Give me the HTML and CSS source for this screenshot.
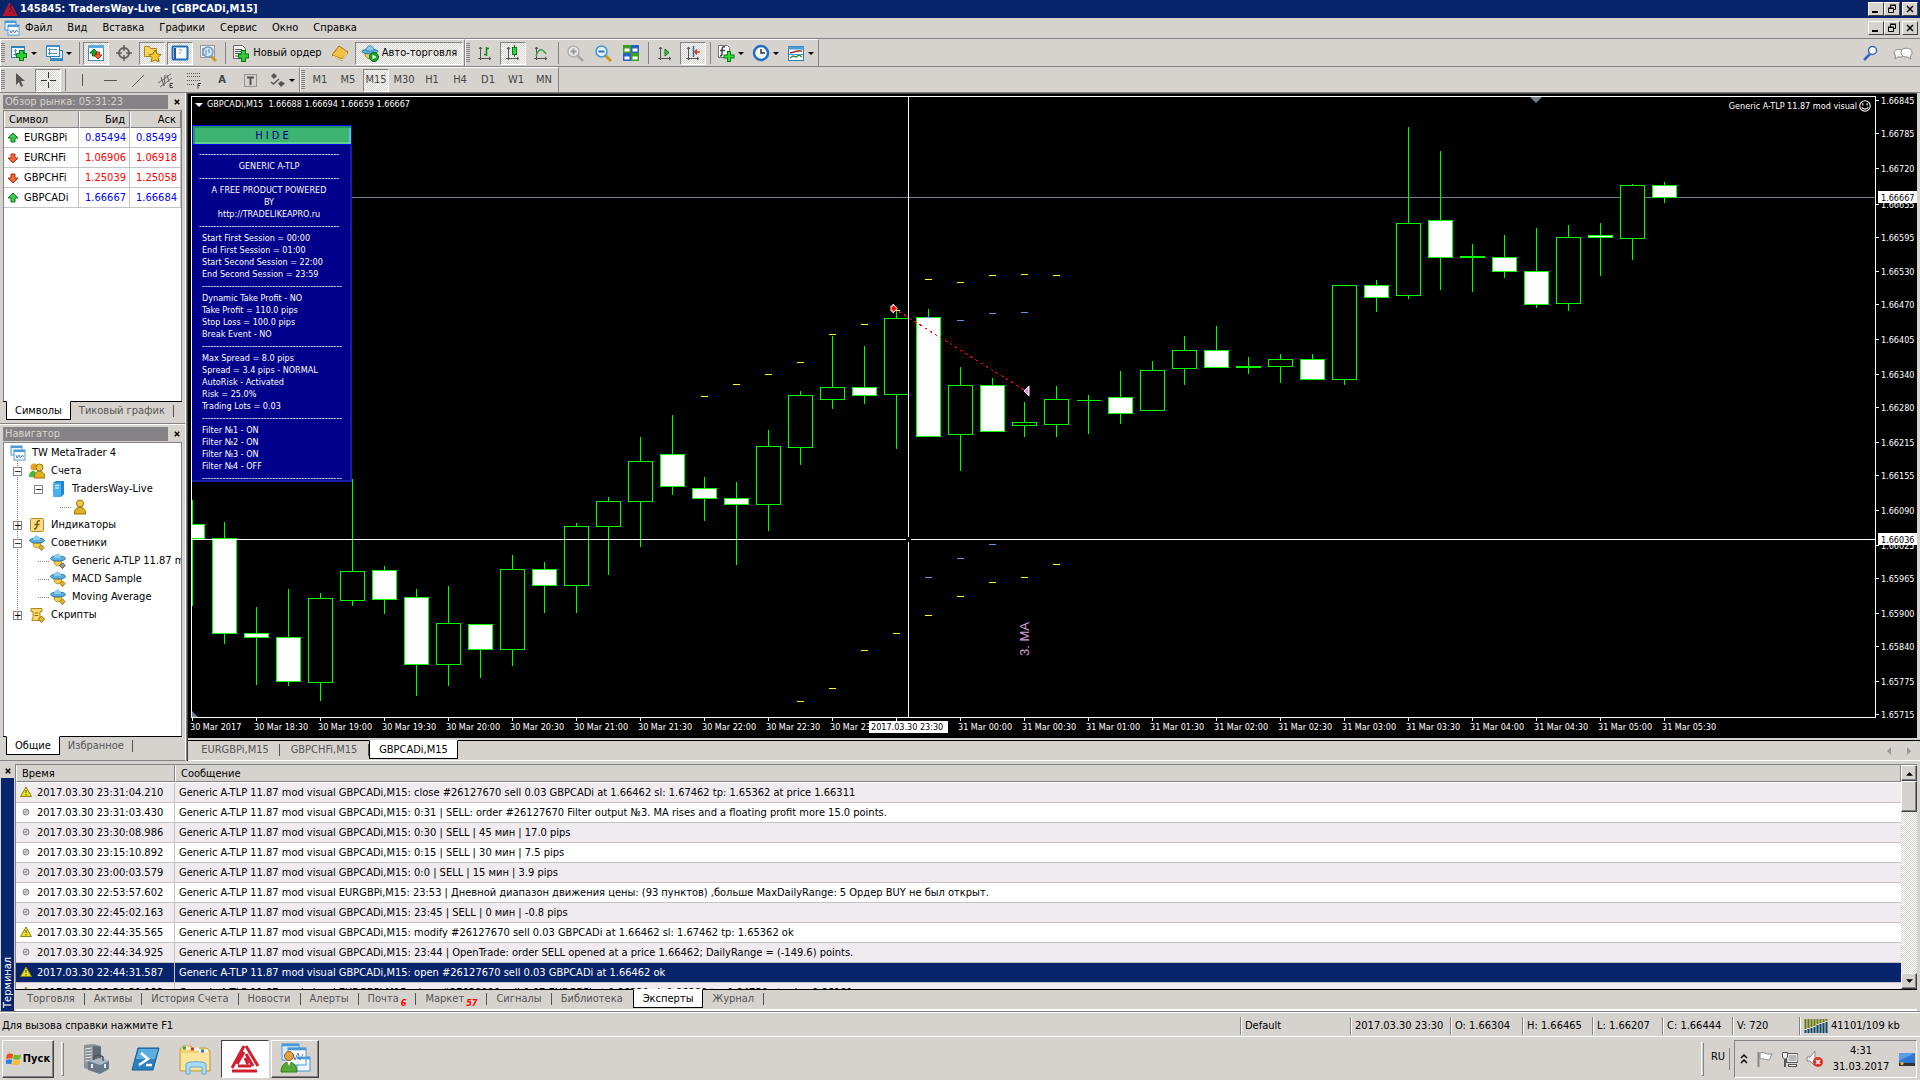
FILE: index.html
```html
<!DOCTYPE html>
<html lang="ru">
<head>
<meta charset="utf-8">
<title>145845: TradersWay-Live - [GBPCADi,M15]</title>
<link rel="stylesheet" href="styles.css">
</head>
<body>
<svg class="defs" aria-hidden="true">
  <symbol id="i-logo" viewBox="0 0 16 16"><path d="M8 2 2 14h12L9.500 4.500M8 6.500 5 12h6.500M8.500 8.500l2 3" fill="none" stroke="#b8142c" stroke-width="2"/></symbol>
  <symbol id="i-charts" viewBox="0 0 16 16"><rect x="1" y="1" width="11" height="9" fill="#eaf5fd" stroke="#4a9ad8"/><path d="M1 2h11" stroke="#4a9ad8" stroke-width="2"/><rect x="4" y="5" width="11" height="10" fill="#fff" stroke="#4a9ad8"/><path d="M4 6h11" stroke="#4a9ad8" stroke-width="2"/><path d="m6 10 1 3 2-3 1.500 3 2-3 1 2" fill="none" stroke="#5878c0"/></symbol>
  <symbol id="i-newchart" viewBox="0 0 18 18"><rect x="1.500" y="2.500" width="13" height="11" fill="#f2f9ff" stroke="#2f7fb8"/><path d="M1 3h14" stroke="#2f7fb8" stroke-width="2"/><path d="M5.500 5v7M3 10.500h9M4 6.500h3" stroke="#5a8fb8"/><path d="M11.500 6v11M6 11.500h11" stroke="#0a7a12" stroke-width="5"/><path d="M11.500 7v9M7 11.500h9" stroke="#2ecc38" stroke-width="3"/></symbol>
  <symbol id="i-profiles" viewBox="0 0 18 18"><rect x="5.500" y="6.500" width="12" height="10" fill="#dceefa" stroke="#2f7fb8"/><rect x="1.500" y="1.500" width="13" height="11" fill="#f2f9ff" stroke="#2f7fb8"/><path d="M1 2h14M5 15h12" stroke="#3f8fc8" stroke-width="2"/><path d="M4.500 4v7M3 5.500h9M3 9.500h9" stroke="#5a8fb8"/></symbol>
  <symbol id="i-market" viewBox="0 0 18 18"><rect x="1.500" y="1.500" width="15" height="15" fill="#fff" stroke="#3f8fc8"/><path d="M1 2.500h16" stroke="#5aaae0" stroke-width="3"/><path d="m7 5 4 4H8.500v3h-3V9H3z" fill="#1fa82c" stroke="#0a6a14"/><path d="m11 15-4-4h2.500V8h3v3H15z" fill="#f0603a" stroke="#b03010"/></symbol>
  <symbol id="i-target" viewBox="0 0 18 18"><circle cx="9" cy="9" r="5" fill="none" stroke="#606060" stroke-width="2"/><path d="M9 1v6M9 11v6M1 9h6M11 9h6" stroke="#606060" stroke-width="1.500"/></symbol>
  <symbol id="i-nav" viewBox="0 0 18 18"><path d="M1.500 2.500h5l1 2h6v8h-12z" fill="#f7d560" stroke="#b08518"/><path d="m12 6 2 4 4 .5-3 3 1 4.500-4-2-4 2 1-4.500-3-3 4-.5z" fill="#f8c828" stroke="#9a7410"/></symbol>
  <symbol id="i-terminal" viewBox="0 0 18 18"><rect x="1.500" y="2.500" width="15" height="13" rx="1" fill="#f4faff" stroke="#1f6fb8" stroke-width="2"/><path d="M4 4v11" stroke="#3050a0" stroke-width="2"/><path d="M8 6h3M8 9h2" stroke="#8898b8"/></symbol>
  <symbol id="i-tester" viewBox="0 0 18 18"><rect x="1.500" y="1.500" width="14" height="12" fill="#eee" stroke="#999"/><path d="M4 4v8M7 3v5" stroke="#555"/><path d="m11 11 6 6" stroke="#c89a28" stroke-width="3"/><circle cx="9" cy="8" r="5" fill="#cfe6f8" stroke="#6a9fc8" stroke-width="1.500"/><path d="M7 6v5M10 5v4" stroke="#5a88b0"/></symbol>
  <symbol id="i-order" viewBox="0 0 18 18"><path d="M1.500 1.500h9l3 3v10h-12z" fill="#f4f4f4" stroke="#6a6a6a"/><path d="M3 5.500h7M3 7.500h8M3 9.500h8M3 12h5" stroke="#555"/><path d="M11.500 6v12M6 12h11" stroke="#0a7a12" stroke-width="5"/><path d="M11.500 7v10M7 12h9" stroke="#2ecc38" stroke-width="3"/></symbol>
  <symbol id="i-book" viewBox="0 0 18 18"><path d="m1 12 7-9 9 6-6 8z" fill="#9a6a10"/><path d="m1 11 7-9 9 6-6 7z" fill="#f3c044" stroke="#a87414"/><path d="m2 12 9 4 5-7" fill="none" stroke="#fff0c0"/></symbol>
  <symbol id="i-expert" viewBox="0 0 18 18"><path d="M4 9c0 7 9 8 10 0z" fill="#f5d04a" stroke="#a88018"/><ellipse cx="9" cy="7.500" rx="8" ry="2.500" fill="#5aaee0" stroke="#2f78a8"/><path d="M5 7c0-7 8-7 8 0z" fill="#8accf0" stroke="#3f88b8"/></symbol>
  <symbol id="i-auto" viewBox="0 0 18 18"><use href="#i-expert"/><circle cx="13" cy="13" r="4.500" fill="#18a828" stroke="#0a6814"/><path d="m11.500 10.500 4 2.500-4 2.500z" fill="#fff"/></symbol>
  <symbol id="i-bars" viewBox="0 0 18 18"><path d="M4.500 3v13M2 14.500h13M3 5l1.500-2L6 5m7 8 2 1.500-2 1.500" fill="none" stroke="#555"/><path d="M10.500 3v9M8 10.500h3M10 4.500h3" stroke="#0f8a1c" stroke-width="1.500"/></symbol>
  <symbol id="i-candle" viewBox="0 0 18 18"><path d="M4.500 3v13M2 14.500h13M3 5l1.500-2L6 5m7 8 2 1.500-2 1.500" fill="none" stroke="#555"/><path d="M10.500 1v12" stroke="#0a7a12"/><rect x="8.500" y="3.500" width="4" height="7" fill="#2ed840" stroke="#0a7a12"/></symbol>
  <symbol id="i-line" viewBox="0 0 18 18"><path d="M4.500 3v13M2 14.500h13M3 5l1.500-2L6 5m7 8 2 1.500-2 1.500" fill="none" stroke="#555"/><path d="M4 12c3-8 6-8 10-2" fill="none" stroke="#3fa048" stroke-width="1.500"/></symbol>
  <symbol id="i-zoomin" viewBox="0 0 18 18"><path d="m11 11 6 6" stroke="#a8a8a8" stroke-width="2.500"/><circle cx="7.500" cy="7.500" r="5.500" fill="#e8e8e8" stroke="#b0b0b0" stroke-width="1.500"/><path d="M4.500 7.500h6M7.500 4.500v6" stroke="#999" stroke-width="2"/></symbol>
  <symbol id="i-zoomout" viewBox="0 0 18 18"><path d="m11 11 6 6" stroke="#c89a18" stroke-width="3"/><circle cx="7.500" cy="7.500" r="5.500" fill="#dff0fc" stroke="#3f98d8" stroke-width="1.500"/><path d="M4.500 7.500h6" stroke="#2f78b8" stroke-width="2"/></symbol>
  <symbol id="i-tile" viewBox="0 0 18 18"><path d="M1 1h8v8H1zM9 9h8v8H9z" fill="#3fa020"/><path d="M9 1h8v8H9zM1 9h8v8H1z" fill="#2860c8"/><path d="M2.500 4.500h5v3h-5zm8 0h5v3h-5zm-8 8h5v3h-5zm8 0h5v3h-5z" fill="#fff"/></symbol>
  <symbol id="i-scroll" viewBox="0 0 18 18"><path d="M4.500 3v13M2 14.500h13M3 5l1.500-2L6 5m7 8 2 1.500-2 1.500" fill="none" stroke="#555"/><path d="m9 5 4 3.500L9 12z" fill="#3fc850" stroke="#0a7a12"/></symbol>
  <symbol id="i-shift" viewBox="0 0 18 18"><path d="M4.500 3v13M2 14.500h13M3 5l1.500-2L6 5m7 8 2 1.500-2 1.500" fill="none" stroke="#555"/><path d="M9.500 2v11" stroke="#1f6fa8" stroke-width="1.500"/><path d="M16 8h-5m2-2.500L11 8l2 2.500" fill="none" stroke="#c83c10" stroke-width="1.500"/></symbol>
  <symbol id="i-indic" viewBox="0 0 18 18"><path d="M1.500 1.500h9l2 2v10h-11z" fill="#fff" stroke="#777"/><path d="M8 3c-3-1-3 2-3 5s0 4-2 4M3 6.500h5" fill="none" stroke="#444" stroke-width="1.500"/><path d="M12 7v11M6.500 12.500h11" stroke="#0a7a12" stroke-width="4"/><path d="M12 8v9M7.500 12.500h9" stroke="#2ee038" stroke-width="2"/></symbol>
  <symbol id="i-clock" viewBox="0 0 18 18"><circle cx="9" cy="9" r="7" fill="#f2f8fd" stroke="#1f6fc0" stroke-width="2.500"/><path d="M9 5v4h4" fill="none" stroke="#333" stroke-width="1.500"/></symbol>
  <symbol id="i-templ" viewBox="0 0 18 18"><rect x="1.500" y="2.500" width="15" height="14" fill="#fff" stroke="#2f7fc0"/><path d="M1 4h16" stroke="#4a9ad8" stroke-width="3"/><path d="m3 9 4-1 3-1 5 0" fill="none" stroke="#a03020" stroke-width="1.500"/><path d="m3 14 3-2 3 1 3-2 3 2" fill="none" stroke="#2f8a38" stroke-width="1.500"/><path d="M2 10.500h14" stroke="#4a9ad8"/></symbol>
  <symbol id="i-arrow" viewBox="0 0 18 18"><path d="M5 2v12l3-3 2 5 2-1-2-5h4z" fill="#555"/></symbol>
  <symbol id="i-cross" viewBox="0 0 18 18"><path d="M9.500 1v6M9.500 11v6M2 9.500h6M11 9.500h6" stroke="#333"/></symbol>
  <symbol id="i-vline" viewBox="0 0 18 18"><path d="M9.500 3v12" stroke="#555"/></symbol>
  <symbol id="i-hline" viewBox="0 0 18 18"><path d="M3 9.500h13" stroke="#555"/></symbol>
  <symbol id="i-trend" viewBox="0 0 18 18"><path d="M3 16 15 4" stroke="#666"/></symbol>
  <symbol id="i-channel" viewBox="0 0 18 18"><path d="m1 12 13-9M3 16 15 7M4 6l3 9M8 4l-1 11M10 4l2 7" stroke="#666" fill="none"/><path d="M16 12.500h-3v4h3m-3-2h2" fill="none" stroke="#444"/></symbol>
  <symbol id="i-fibo" viewBox="0 0 18 18"><path d="M2 2.500h14M2 5.500h14M2 9.500h14M2 13.500h8" stroke="#555" stroke-dasharray="1 1"/><path d="M16 12.500h-3v5m0-3h2" fill="none" stroke="#444"/></symbol>
  <symbol id="i-label" viewBox="0 0 18 18"><rect x="3.500" y="3.500" width="12" height="12" fill="none" stroke="#555" stroke-dasharray="1 1"/><path d="M6 6.500h7M9.500 6v8" stroke="#555" stroke-width="2"/></symbol>
  <symbol id="i-shapes" viewBox="0 0 18 18"><path d="m6 2 3 3-3 3-3-3zM13 10l4 2.500-4 3.500-3-3.500z" fill="#555"/><path d="m3 11 2.500 2L11 8" fill="none" stroke="#555" stroke-width="1.500"/></symbol>
  <symbol id="i-up" viewBox="0 0 12 12"><path d="m6 1 5 5H8v4H4V6H1z" fill="#3fc850" stroke="#0a7a12"/></symbol>
  <symbol id="i-down" viewBox="0 0 12 12"><path d="m6 11 5-5H8V2H4v4H1z" fill="#f0683c" stroke="#a83010"/></symbol>
  <symbol id="i-person" viewBox="0 0 16 16"><path d="M2.500 15c-1-9 12-9 11 0z" fill="#e0b020" stroke="#94700c"/><circle cx="8" cy="4.500" r="3.500" fill="#f0c840" stroke="#94700c"/></symbol>
  <symbol id="i-people" viewBox="0 0 16 16"><path d="M0 14c0-8 8-8 8 0z" fill="#40b840"/><circle cx="5" cy="4" r="3.500" fill="#e8a020"/><path d="M5 15c0-9 11-9 11 0z" fill="#e0b020" stroke="#94700c"/><circle cx="10.500" cy="4.500" r="3.500" fill="#f0c840" stroke="#94700c"/></symbol>
  <symbol id="i-server" viewBox="0 0 16 16"><path d="M3 2 6 0h8v13l-3 3H3z" fill="#1f88d0"/><path d="M3 2h8v14H3z" fill="#4ab0f0"/><path d="M5 4.500h4M5 7h4" stroke="#fff"/></symbol>
  <symbol id="i-func" viewBox="0 0 16 16"><rect x="1.500" y="1.500" width="13" height="13" rx="1" fill="#f8dc88" stroke="#b88c20"/><path d="M11 4c-3-1-3 2-3 4s0 4-3 4M5.500 7.500h5" fill="none" stroke="#805808" stroke-width="1.500"/></symbol>
  <symbol id="i-advisor" viewBox="0 0 16 16"><path d="M4 8c0 6 7 7 8 0z" fill="#f5d04a" stroke="#b89018"/><ellipse cx="8" cy="5.500" rx="7.500" ry="2.500" fill="#5aaee0" stroke="#2f78a8"/><path d="M4 5c0-6 7-6 7 0z" fill="#8accf0"/><path d="m12.500 10 2.500 2.500-2.500 3-2.500-3z" fill="#e8b830" stroke="#94700c"/></symbol>
  <symbol id="i-advisor-off" viewBox="0 0 16 16"><use href="#i-advisor"/><path d="m12.500 10 2.500 2.500-2.500 3-2.500-3z" fill="#999" stroke="#666"/></symbol>
  <symbol id="i-script" viewBox="0 0 16 16"><path d="M2 1.500h11v3h-2v7h2v2H3v-2h1v-7H2z" fill="#f8dc70" stroke="#b08818"/><path d="M5.500 6h4M5.500 8.500h4" stroke="#94700c"/><path d="m12.500 9 3 3-3 3.500-3-3.500z" fill="#e8b830" stroke="#94700c"/></symbol>
  <symbol id="i-warn" viewBox="0 0 14 14"><path d="M7 2 12.500 11.500h-11z" fill="#e8e020" stroke="#8a8410"/><path d="M7 5v3M7 9v1.500" stroke="#555" stroke-width="1"/></symbol>
  <symbol id="i-info" viewBox="0 0 14 14"><circle cx="7" cy="7" r="3" fill="#d0d0d0" stroke="#888"/><path d="M5.500 8 8 5.500" stroke="#888"/></symbol>
  <symbol id="i-win" viewBox="0 0 18 18"><path d="M1 4c3-2 5-1 7 0L7 9C5 8 3 8 0 9z" fill="#e8501c"/><path d="M9 4c3 1 5 1 8 0l-1 5c-3 1-5 1-8 0z" fill="#6ab82c"/><path d="M0 10c3-1 5-1 7 0l-1 5c-3-1-4-1-7 0z" fill="#2f80d8"/><path d="M8 10c3 1 5 1 8 0l-1 5c-3 1-5 1-8 0z" fill="#f8c020"/></symbol>
</svg>

<header class="titlebar">
  <svg class="ic16"><use href="#i-logo"/></svg>
  <h1>145845: TradersWay-Live - [GBPCADi,M15]</h1>
  <div class="winbtns">
    <button type="button" aria-label="Свернуть"><svg viewBox="0 0 12 10"><path d="M2 8h6" stroke="#000" stroke-width="2"/></svg></button>
    <button type="button" aria-label="Восстановить"><svg viewBox="0 0 12 10"><path d="M4.500 4V1.500h5v4H8M4 1h6M2.500 4.500h5v4h-5zM2 4h6" fill="none" stroke="#000"/></svg></button>
    <button type="button" aria-label="Закрыть" class="gap"><svg viewBox="0 0 12 10"><path d="m3 2 6 6M9 2 3 8" stroke="#000" stroke-width="1.500"/></svg></button>
  </div>
</header>

<nav class="menubar">
  <svg class="ic16"><use href="#i-charts"/></svg>
  <a href="#">Файл</a><a href="#">Вид</a><a href="#">Вставка</a><a href="#">Графики</a><a href="#">Сервис</a><a href="#">Окно</a><a href="#">Справка</a>
  <div class="winbtns">
    <button type="button" aria-label="Свернуть"><svg viewBox="0 0 12 10"><path d="M2 8h6" stroke="#000" stroke-width="2"/></svg></button>
    <button type="button" aria-label="Восстановить"><svg viewBox="0 0 12 10"><path d="M4.500 4V1.500h5v4H8M4 1h6M2.500 4.500h5v4h-5zM2 4h6" fill="none" stroke="#000"/></svg></button>
    <button type="button" aria-label="Закрыть" class="gap"><svg viewBox="0 0 12 10"><path d="m3 2 6 6M9 2 3 8" stroke="#000" stroke-width="1.500"/></svg></button>
  </div>
</nav>

<div class="toolrow">
  <div class="toolbar">
    <i class="grip"></i>
    <button type="button" class="tb dd" aria-label="Новый график"><svg><use href="#i-newchart"/></svg></button>
    <button type="button" class="tb dd" aria-label="Профили"><svg><use href="#i-profiles"/></svg></button>
    <i class="sep"></i>
    <button type="button" class="tb on" aria-label="Обзор рынка"><svg><use href="#i-market"/></svg></button>
    <button type="button" class="tb" aria-label="Окно данных"><svg><use href="#i-target"/></svg></button>
    <button type="button" class="tb on" aria-label="Навигатор"><svg><use href="#i-nav"/></svg></button>
    <button type="button" class="tb on" aria-label="Терминал"><svg><use href="#i-terminal"/></svg></button>
    <button type="button" class="tb" aria-label="Тестер"><svg><use href="#i-tester"/></svg></button>
    <i class="sep"></i>
    <button type="button" class="tb wide order"><svg><use href="#i-order"/></svg>Новый ордер</button>
    <button type="button" class="tb" aria-label="Редактор"><svg><use href="#i-book"/></svg></button>
    <button type="button" class="tb wide auto on"><svg><use href="#i-auto"/></svg>Авто-торговля</button>
  </div>
  <div class="toolbar">
    <i class="grip"></i>
    <button type="button" class="tb" aria-label="Бары"><svg><use href="#i-bars"/></svg></button>
    <button type="button" class="tb on" aria-label="Свечи"><svg><use href="#i-candle"/></svg></button>
    <button type="button" class="tb" aria-label="Линия"><svg><use href="#i-line"/></svg></button>
    <i class="sep"></i>
    <button type="button" class="tb" aria-label="Увеличить"><svg><use href="#i-zoomin"/></svg></button>
    <button type="button" class="tb" aria-label="Уменьшить"><svg><use href="#i-zoomout"/></svg></button>
    <button type="button" class="tb" aria-label="Упорядочить"><svg><use href="#i-tile"/></svg></button>
    <i class="sep"></i>
    <button type="button" class="tb" aria-label="Автопрокрутка"><svg><use href="#i-scroll"/></svg></button>
    <button type="button" class="tb on" aria-label="Сдвиг графика"><svg><use href="#i-shift"/></svg></button>
    <i class="sep"></i>
    <button type="button" class="tb dd" aria-label="Индикаторы"><svg><use href="#i-indic"/></svg></button>
    <button type="button" class="tb dd" aria-label="Периоды"><svg><use href="#i-clock"/></svg></button>
    <button type="button" class="tb dd" aria-label="Шаблоны"><svg><use href="#i-templ"/></svg></button>
  </div>
  <div class="toolright">
    <svg viewBox="0 0 18 18"><path d="m2 16 6-6" stroke="#2f68c0" stroke-width="2.500"/><circle cx="10.500" cy="6.500" r="4" fill="#fff" stroke="#2f68c0" stroke-width="1.500"/></svg>
    <svg viewBox="0 0 22 18"><path d="M2 9c0-5 10-5 10 0s-4 4-6 4l-3 2 .5-3Z" fill="#f4f4f4" stroke="#888"/><path d="M9 8c0-5 11-5 11 0 0 3-1 3-2 4l1 3-4-2c-3 0-6-1-6-5z" fill="#fff" stroke="#888"/></svg>
  </div>
</div>
<div class="toolrow second">
  <div class="toolbar">
    <i class="grip"></i>
    <button type="button" class="tb" aria-label="Курсор"><svg><use href="#i-arrow"/></svg></button>
    <button type="button" class="tb on" aria-label="Перекрестие"><svg><use href="#i-cross"/></svg></button>
    <i class="sep"></i>
    <button type="button" class="tb" aria-label="Вертикальная линия"><svg><use href="#i-vline"/></svg></button>
    <button type="button" class="tb" aria-label="Горизонтальная линия"><svg><use href="#i-hline"/></svg></button>
    <button type="button" class="tb" aria-label="Трендовая линия"><svg><use href="#i-trend"/></svg></button>
    <button type="button" class="tb" aria-label="Канал"><svg><use href="#i-channel"/></svg></button>
    <button type="button" class="tb" aria-label="Фибоначчи"><svg><use href="#i-fibo"/></svg></button>
    <button type="button" class="tb letter">A</button>
    <button type="button" class="tb" aria-label="Метка"><svg><use href="#i-label"/></svg></button>
    <button type="button" class="tb dd" aria-label="Стрелки"><svg><use href="#i-shapes"/></svg></button>
  </div>
  <div class="toolbar">
    <i class="grip"></i>
    <button type="button" class="tb">M1</button><button type="button" class="tb">M5</button><button type="button" class="tb on">M15</button><button type="button" class="tb">M30</button><button type="button" class="tb">H1</button><button type="button" class="tb">H4</button><button type="button" class="tb">D1</button><button type="button" class="tb">W1</button><button type="button" class="tb">MN</button>
  </div>
</div>

<main class="workspace">
  <aside class="side">
    <section class="pane market">
      <header><h2>Обзор рынка: 05:31:23</h2><button type="button" class="x" aria-label="Закрыть"><svg viewBox="0 0 8 8"><path d="m1 1 6 6M7 1 1 7" stroke="#000" stroke-width="2"/></svg></button></header>
      <div class="box">
        <table class="quotes">
          <thead><tr><th>Символ</th><th>Бид</th><th>Аск</th></tr></thead>
          <tbody>
            <tr class="up"><td><svg><use href="#i-up"/></svg>EURGBPi</td><td>0.85494</td><td>0.85499</td></tr>
            <tr class="down"><td><svg><use href="#i-down"/></svg>EURCHFi</td><td>1.06906</td><td>1.06918</td></tr>
            <tr class="down"><td><svg><use href="#i-down"/></svg>GBPCHFi</td><td>1.25039</td><td>1.25058</td></tr>
            <tr class="up"><td><svg><use href="#i-up"/></svg>GBPCADi</td><td>1.66667</td><td>1.66684</td></tr>
          </tbody>
        </table>
      </div>
      <div class="tabs"><button type="button" class="tab on">Символы</button><button type="button" class="tab">Тиковый график</button></div>
    </section>
    <section class="pane nav">
      <header><h2>Навигатор</h2><button type="button" class="x" aria-label="Закрыть"><svg viewBox="0 0 8 8"><path d="m1 1 6 6M7 1 1 7" stroke="#000" stroke-width="2"/></svg></button></header>
      <div class="box">
        <ul class="tree">
          <li class="root"><svg><use href="#i-charts"/></svg>TW MetaTrader 4</li>
          <li><i class="tog">−</i><svg><use href="#i-people"/></svg>Счета</li>
          <li class="l2"><i class="tog">−</i><svg><use href="#i-server"/></svg>TradersWay-Live</li>
          <li class="l3"><i class="stub"></i><svg><use href="#i-person"/></svg></li>
          <li><i class="tog">+</i><svg><use href="#i-func"/></svg>Индикаторы</li>
          <li><i class="tog">−</i><svg><use href="#i-advisor"/></svg>Советники</li>
          <li class="l2"><i class="stub"></i><svg><use href="#i-advisor-off"/></svg>Generic A-TLP 11.87 mod visual</li>
          <li class="l2"><i class="stub"></i><svg><use href="#i-advisor"/></svg>MACD Sample</li>
          <li class="l2"><i class="stub"></i><svg><use href="#i-advisor"/></svg>Moving Average</li>
          <li><i class="tog">+</i><svg><use href="#i-script"/></svg>Скрипты</li>
        </ul>
      </div>
      <div class="tabs"><button type="button" class="tab on">Общие</button><button type="button" class="tab">Избранное</button></div>
    </section>
  </aside>

  <section class="charts">
    <div class="chart">
      <div class="plot">
        <svg id="plot" class="canvas"></svg>
        <p class="ohlc"><i></i>GBPCADi,M15&nbsp; 1.66688 1.66694 1.66659 1.66667</p>
        <p class="expert">Generic A-TLP 11.87 mod visual<svg viewBox="0 0 11 11"><circle cx="5.500" cy="5.500" r="4.800" fill="none" stroke="#fff"/><path d="M3.500 3v2M7.500 3v2M2.500 6.500c1 2.500 5 2.500 6 0" fill="none" stroke="#fff"/></svg></p>
        <div class="info">
          <button type="button">H I D E</button>
          <pre><span>------------------------------------------------</span>
<b>GENERIC A-TLP</b>
<span>------------------------------------------------</span>
<b>A FREE PRODUCT POWERED</b>
<b>BY</b>
<b>http://TRADELIKEAPRO.ru</b>
<span>------------------------------------------------</span>
Start First Session = 00:00
End First Session = 01:00
Start Second Session = 22:00
End Second Session = 23:59
------------------------------------------------
Dynamic Take Profit - NO
Take Profit = 110.0 pips
Stop Loss = 100.0 pips
Break Event - NO
------------------------------------------------
Max Spread = 8.0 pips
Spread = 3.4 pips - NORMAL
AutoRisk - Activated
Risk = 25.0%
Trading Lots = 0.03
------------------------------------------------
Filter №1 - ON
Filter №2 - ON
Filter №3 - ON
Filter №4 - OFF
------------------------------------------------</pre>
        </div>
      </div>
      <svg id="prices" class="axis"></svg>
      <svg id="times" class="axis times"></svg>
    </div>
    <div class="tabs charttabs">
      <button type="button" class="tab">EURGBPi,M15</button><button type="button" class="tab">GBPCHFi,M15</button><button type="button" class="tab on">GBPCADi,M15</button>
      <svg class="pager" viewBox="0 0 30 10"><path d="M5 1v8L1 5zM21 1v8l4-4z" fill="#9a9898"/></svg>
    </div>
  </section>
</main>

<section class="terminal">
  <div class="spine"><button type="button" class="x" aria-label="Закрыть"><svg viewBox="0 0 8 8"><path d="m1 1 6 6M7 1 1 7" stroke="#000" stroke-width="2"/></svg></button><h2>Терминал</h2></div>
  <div class="tbody">
    <div class="logbox">
      <div class="logscroll">
      <table class="log">
        <thead><tr><th>Время</th><th>Сообщение</th></tr></thead>
        <tbody>
          <tr><td><svg><use href="#i-warn"/></svg>2017.03.30 23:31:04.210</td><td>Generic A-TLP 11.87 mod visual GBPCADi,M15: close #26127670 sell 0.03 GBPCADi at 1.66462 sl: 1.67462 tp: 1.65362 at price 1.66311</td></tr>
          <tr><td><svg><use href="#i-info"/></svg>2017.03.30 23:31:03.430</td><td>Generic A-TLP 11.87 mod visual GBPCADi,M15: 0:31 | SELL: order #26127670 Filter output №3. MA rises and a floating profit more 15.0 points.</td></tr>
          <tr><td><svg><use href="#i-info"/></svg>2017.03.30 23:30:08.986</td><td>Generic A-TLP 11.87 mod visual GBPCADi,M15: 0:30 | SELL | 45 мин | 17.0 pips</td></tr>
          <tr><td><svg><use href="#i-info"/></svg>2017.03.30 23:15:10.892</td><td>Generic A-TLP 11.87 mod visual GBPCADi,M15: 0:15 | SELL | 30 мин | 7.5 pips</td></tr>
          <tr><td><svg><use href="#i-info"/></svg>2017.03.30 23:00:03.579</td><td>Generic A-TLP 11.87 mod visual GBPCADi,M15: 0:0 | SELL | 15 мин | 3.9 pips</td></tr>
          <tr><td><svg><use href="#i-info"/></svg>2017.03.30 22:53:57.602</td><td>Generic A-TLP 11.87 mod visual EURGBPi,M15: 23:53 | Дневной диапазон движения цены: (93 пунктов) ,больше MaxDailyRange: 5 Ордер BUY не был открыт.</td></tr>
          <tr><td><svg><use href="#i-info"/></svg>2017.03.30 22:45:02.163</td><td>Generic A-TLP 11.87 mod visual GBPCADi,M15: 23:45 | SELL | 0 мин | -0.8 pips</td></tr>
          <tr><td><svg><use href="#i-warn"/></svg>2017.03.30 22:44:35.565</td><td>Generic A-TLP 11.87 mod visual GBPCADi,M15: modify #26127670 sell 0.03 GBPCADi at 1.66462 sl: 1.67462 tp: 1.65362 ok</td></tr>
          <tr><td><svg><use href="#i-info"/></svg>2017.03.30 22:44:34.925</td><td>Generic A-TLP 11.87 mod visual GBPCADi,M15: 23:44 | OpenTrade: order SELL opened at a price 1.66462; DailyRange = (-149.6) points.</td></tr>
          <tr class="sel"><td><svg><use href="#i-warn"/></svg>2017.03.30 22:44:31.587</td><td>Generic A-TLP 11.87 mod visual GBPCADi,M15: open #26127670 sell 0.03 GBPCADi at 1.66462 ok</td></tr>
          <tr><td><svg><use href="#i-warn"/></svg>2017.03.30 22:30:31.133</td><td>Generic A-TLP 11.87 mod visual EURGBPi,M15: close #27039909 sell 0.07 EURGBPi at 0.86230 sl: 0.86280 tp: 0.84730 at price 0.86181</td></tr>
        </tbody>
      </table>
      </div>
      <div class="scrollbar"><button type="button" aria-label="Вверх"><svg viewBox="0 0 8 5"><path d="M0 5 4 1l4 4z"/></svg></button><i></i><button type="button" class="dn" aria-label="Вниз"><svg viewBox="0 0 8 5"><path d="M0 0 4 4l4-4z"/></svg></button></div>
    </div>
    <div class="tabs termtabs">
      <button type="button" class="tab">Торговля</button><button type="button" class="tab">Активы</button><button type="button" class="tab">История Счета</button><button type="button" class="tab">Новости</button><button type="button" class="tab">Алерты</button><button type="button" class="tab">Почта<sub>6</sub></button><button type="button" class="tab">Маркет<sub>57</sub></button><button type="button" class="tab">Сигналы</button><button type="button" class="tab last">Библиотека</button><button type="button" class="tab on">Эксперты</button><button type="button" class="tab">Журнал</button>
    </div>
  </div>
</section>

<footer class="statusbar">
  <span class="help">Для вызова справки нажмите F1</span>
  <span class="s-profile">Default</span><span class="s-date">2017.03.30 23:30</span><span class="s-o">O: 1.66304</span><span class="s-h">H: 1.66465</span><span class="s-l">L: 1.66207</span><span class="s-c">C: 1.66444</span><span class="s-v">V: 720</span>
  <span class="s-net"><svg viewBox="0 0 24 14"><path d="M1.500 0v10M4.500 0v9M7.500 0v8M10.500 0v7M13.500 0v5M16.500 0v4M19.500 0v3M22.500 0v2" stroke="#6a7c10" stroke-width="2"/><path d="M1.500 11v3M4.500 10v4M7.500 9v5M10.500 8v6M13.500 6v8M16.500 5v9M19.500 4v10M22.500 3v11" stroke="#104868" stroke-width="2"/></svg>41101/109 kb</span>
</footer>

<footer class="taskbar">
  <button type="button" class="start"><svg><use href="#i-win"/></svg>Пуск</button>
  <i class="tsep"></i>
  <div class="apps">
    <button type="button" class="app" aria-label="Сервер"><svg viewBox="0 0 32 32"><path d="M5 2 14 1l8 2v22l-8 3-9-3z" fill="#8a9298"/><path d="M14 3v25l8-3V4z" fill="#606a72"/><path d="M6 6l7-1M6 9l7-1M6 12l7-1M6 15l7-1M6 18l7-1" stroke="#e0e4e8"/><path d="m9 18 12-3 9 3v8l-9 5-12-4z" fill="#6a7a88"/><path d="m9 18 12 4 9-4-9-3z" fill="#a8b8c4"/><path d="M15 17v-4l5-1 4 2v4" fill="none" stroke="#485460" stroke-width="1.500"/><path d="M13 21v4M26 21v4" stroke="#e8ecf0" stroke-width="2"/></svg></button>
    <button type="button" class="app" aria-label="PowerShell"><svg viewBox="0 0 32 32"><path d="M9 5h21l-6 22H3z" fill="#2a80c0" stroke="#1a5a90"/><path d="M10 6h19l-3 10H7z" fill="#5aaee0"/><path d="m12 10 7 6-9 6M17 22h6" fill="none" stroke="#fff" stroke-width="2.500"/></svg></button>
    <button type="button" class="app" aria-label="Проводник"><svg viewBox="0 0 32 32"><path d="M1 6 4 3h8l2 2h14l3 3v20H1z" fill="#f0d070" stroke="#c8a038"/><path d="M4 5h7M12 6h8M20 8h9" stroke="#fff" stroke-width="3"/><path d="M4 5h3" stroke="#30a830" stroke-width="3"/><path d="M12 6h3" stroke="#d03020" stroke-width="3"/><path d="M22 8h3" stroke="#2878d0" stroke-width="3"/><path d="M2 10h28v17H2z" fill="#f8e49a"/><path d="M7 31V21c0-3 20-3 20 0v10h-4v-7H11v7z" fill="#a8dcf4" stroke="#60a8d0"/></svg></button>
    <button type="button" class="app on" aria-label="TradersWay"><svg viewBox="0 0 32 32"><path d="M15 3 3 25M17 3l12 20M3 28h25M15 9 8 21M17 11l7 12M9 23h13M16 15l3 6" fill="none" stroke="#d02030" stroke-width="3"/></svg></button>
    <button type="button" class="app raised" aria-label="Терминал"><svg viewBox="0 0 32 32"><rect x="3" y="1" width="17" height="16" fill="#d8ecfa" stroke="#4a98d8"/><rect x="18" y="14" width="13" height="14" fill="#eef7fd" stroke="#4a98d8"/><rect x="9" y="5" width="18" height="17" fill="#f4faff" stroke="#4a98d8"/><path d="M3 2h17M9 6h18M18 15h13" stroke="#4a98d8" stroke-width="2.500"/><path d="m12 14 2-3 2 6 3-7 2 7 3-6" fill="none" stroke="#5888c8"/><path d="M2 29c0-13 16-13 16 0z" fill="#58a838" stroke="#387818"/><path d="m8 18 2 5 2-5z" fill="#fff"/><circle cx="10" cy="13" r="4.500" fill="#e0a048" stroke="#a06818"/></svg></button>
  </div>
  <i class="tsep"></i>
  <span class="lang">RU</span>
  <div class="tray">
    <svg class="chev" viewBox="0 0 8 12"><path d="m1 5 3-3 3 3M1 10l3-3 3 3" fill="none" stroke="#000" stroke-width="1.500"/></svg>
    <svg viewBox="0 0 18 18"><path d="M2.500 2v15" stroke="#888" stroke-width="2"/><path d="M4 3c4-2 5 2 12 1-2 3-1 4-3 6-4 0-5-2-9-1z" fill="#fff" stroke="#888"/></svg>
    <svg viewBox="0 0 18 18"><path d="M5.500 3.500h11v9h-11z" fill="#b8b8b8" stroke="#555"/><path d="M7 4.500h9v7H7z" fill="none" stroke="#eee"/><path d="M7 15.500h9" stroke="#555" stroke-width="3"/><path d="M8 15.500h7" stroke="#fff"/><path d="M1.500 2.500h5V7l-1.500 2H3L1.500 7z" fill="#eee" stroke="#555"/><path d="M4 9v8" stroke="#555" stroke-width="2"/></svg>
    <svg viewBox="0 0 18 18"><path d="M1 7h3l5-6v15l-5-5H1z" fill="#f4f4f4" stroke="#888"/><circle cx="12" cy="12" r="5" fill="#e03020"/><path d="m10 10 4 4M14 10l-4 4" stroke="#fff" stroke-width="1.500"/></svg>
    <time>4:31<br>31.03.2017</time>
    <svg viewBox="0 0 18 18"><rect x="1" y="3" width="16" height="13" fill="#2f78d0"/><path d="M1 3h16L1 11z" fill="#5a9ce8"/><path d="M1 14.500h16" stroke="#333" stroke-width="3"/><circle cx="4" cy="13.500" r="1.500" fill="#f8c020"/></svg>
  </div>
</footer>
<script src="chart.js"></script>
</body>
</html>
```
FILE: styles.css
```css
* { box-sizing: border-box; margin: 0; padding: 0; }
:root { --face: #d6d3ce; --navy: #08246b; --shade: #848284; --ui: "DejaVu Sans Condensed", "DejaVu Sans", sans-serif; }
body { display: flex; flex-direction: column; min-height: 100vh; background: var(--face); color: #000; font: 11px/14px var(--ui); font-stretch: condensed; overflow: hidden; }
button { font: inherit; color: inherit; background: none; border: 0; display: flex; align-items: center; justify-content: center; white-space: nowrap; }
svg { display: block; flex: none; }
i { font-style: normal; flex: none; }
h1, h2 { font-size: 11px; line-height: 14px; }
h2 { font-weight: 400; }
.defs { display: none; }
.ic16 { width: 16px; height: 16px; }

.titlebar { height: 18px; display: flex; align-items: center; gap: 2px; padding: 0 2px; background: var(--navy); color: #fff; }
.menubar { height: 20px; display: flex; align-items: center; padding: 0 2px 0 4px; }
.menubar a { color: inherit; text-decoration: none; padding: 0 8px 0 7px; }
.menubar .ic16 { margin-right: -2px; }
.winbtns { display: flex; margin-left: auto; }
.winbtns button { width: 16px; height: 14px; background: var(--face); border: 1px solid; border-color: #fff #404040 #404040 #fff; }
.winbtns .gap { margin-left: 2px; }
.winbtns svg { width: 12px; height: 10px; }

.toolrow { display: flex; height: 28px; border-top: 1px solid var(--shade); }
.toolrow.second { height: 26px; }
.toolbar { display: flex; align-items: center; gap: 2px; border-top: 1px solid #fff; border-right: 1px solid var(--shade); border-left: 1px solid #fff; padding: 0 1px 0 0; }
.toolrow.second .tb { color: #444; }
.grip { width: 4px; height: 20px; background: repeating-linear-gradient(#848284 0 1px, transparent 1px 2px); }
.sep { width: 4px; height: 22px; border-left: 1px solid transparent; background: linear-gradient(90deg, transparent 1px, var(--shade) 1px 2px, transparent 2px); }
.tb { width: 26px; height: 23px; gap: 2px; border: 1px solid transparent; }
.tb svg { width: 18px; height: 18px; }
.tb.on { border-color: var(--shade) #fff #fff var(--shade); background: repeating-conic-gradient(#fff 0 25%, var(--face) 0 50%) 0 0 / 2px 2px; }
.tb.dd { width: 33px; gap: 3px; }
.tb.dd::after { content: ""; border: 3px solid transparent; border-top-color: #000; border-bottom: 0; }
.tb.wide { gap: 3px; }
.tb.order { width: 96px; }
.tb.auto { width: 108px; }
.letter { font-weight: 700; }
.toolright { margin-left: auto; display: flex; align-items: center; gap: 12px; padding-right: 6px; }
.toolright svg { height: 18px; }

.workspace { flex: 1; display: flex; min-height: 0; border-top: 1px solid var(--shade); }
.side { width: 187px; display: flex; flex-direction: column; flex: none; border-right: 1px solid var(--shade); }
.pane { display: flex; flex-direction: column; padding: 2px 3px 2px; border-bottom: 1px solid var(--shade); border-right: 1px solid #fff; }
.market { height: 331px; }
.nav { flex: 1; border-top: 1px solid #fff; padding-bottom: 4px; }
.pane header { display: flex; gap: 4px; align-items: center; margin-bottom: 1px; }
.pane h2 { flex: 1; background: var(--shade); color: var(--face); padding-left: 2px; height: 14px; }
.x { width: 10px; height: 14px; }
.x svg { width: 6px; height: 6px; }
.pane .box { flex: 1; background: #fff; border: 1px solid var(--shade); border-bottom: 0; overflow: hidden; min-height: 0; }
table { border-collapse: separate; border-spacing: 0; width: 100%; table-layout: fixed; }
th { font-weight: 400; text-align: left; background: var(--face); border: 1px solid; border-color: var(--face) var(--shade) var(--shade) #fff; }
.quotes th { height: 17px; padding: 0 4px; }
.quotes th:nth-child(n+2), .quotes td:nth-child(n+2) { text-align: right; width: 51px; }
.quotes td { height: 20px; padding: 0 3px; border: solid #c6c3c6; border-width: 0 1px 1px 0; }
.quotes td:first-child svg { width: 12px; height: 12px; display: inline-block; vertical-align: -3px; margin-right: 5px; }
.up td:nth-child(n+2) { color: #00f; }
.down td:nth-child(n+2) { color: #f00; }

.tabs { display: flex; height: 20px; border-top: 1px solid #000; color: #555; }
.tab { position: relative; height: 18px; padding: 0 10px; border-right: 1px solid transparent; }
.tab:not(.on)::after { content: ""; position: absolute; right: -1px; top: 3px; height: 12px; width: 1px; background: #555; }
.tab.last::after { display: none; }
.tab.on { color: #000; background: #fff; border: 1px solid #000; border-top-color: #fff; margin-top: -1px; height: 19px; }
.pane .tabs { padding-left: 3px; }
.pane .tab { padding: 0 8px; }

.tree { list-style: none; padding: 1px 0 0 5px; background: repeating-linear-gradient(#848284 0 1px, #fff 1px 2px) 13px 18px / 1px 156px no-repeat; }
.tree li { display: flex; align-items: center; height: 18px; white-space: nowrap; padding-left: 4px; }
.tree li.root { padding-left: 0; }
.tree li.l2 { padding-left: 25px; }
.tree li.l3 { padding-left: 47px; }
.tree svg { width: 16px; height: 16px; margin: 0 6px 0 1px; }
.tog { width: 9px; height: 9px; border: 1px solid var(--shade); background: #fff; font-size: 10px; line-height: 7px; text-align: center; margin-right: 6px; }
.stub { width: 11px; height: 1px; margin: 0 0 0 4px; background: repeating-linear-gradient(90deg, #848284 0 1px, transparent 1px 2px); }

.charts { flex: 1; display: flex; flex-direction: column; min-width: 0; border-left: 1px solid #424142; }
.chart { flex: 1; min-height: 0; display: grid; grid-template: 1fr 20px / 1fr 41px; background: #000; color: #fff; border-top: 1px solid #424142; padding: 2px 0 0 3px; margin-right: 3px; font-size: 9px; }
.plot { position: relative; border: 1px solid #fff; min-width: 0; min-height: 0; overflow: hidden; }
.canvas, .axis { width: 100%; height: 100%; }
.canvas { position: absolute; inset: 0; }
.axis { fill: #fff; min-width: 0; min-height: 0; }
.axis.times { grid-column: 1 / 3; }
.ohlc { position: absolute; left: 3px; top: 1px; display: flex; align-items: center; gap: 4px; line-height: 13px; }
.ohlc i { border: 4px solid transparent; border-top-color: #fff; border-bottom: 0; }
.expert { position: absolute; right: 4px; top: 3px; display: flex; gap: 2px; line-height: 13px; }
.expert svg { width: 12px; height: 12px; }
.info { position: absolute; left: 0; top: 28px; width: 160px; background: #00008c; border: solid #1820a8; border-width: 0 2px 2px 0; line-height: 12px; }
.info button { width: 160px; height: 20px; background: #3cb371; border: 1px solid #00f; color: #00008c; font-size: 11px; box-shadow: inset 2px 2px #209858, inset -2px -2px #60d090; margin-bottom: 3px; padding-top: 2px; }
.info pre { font: 9px/12px var(--ui); font-stretch: condensed; padding-left: 10px; height: 332px; }
.info pre span { margin-left: -3px; }
.info pre b { display: inline-block; width: 134px; text-align: center; font-weight: 400; }

.charttabs { height: 21px; margin-top: 2px; padding-left: 3px; border-bottom: 1px solid #fff; }
.charttabs .tab { width: 89px; }
.pager { width: 30px; height: 10px; margin: 5px 4px 0 auto; }

.terminal { display: flex; margin-top: 3px; padding-right: 3px; border-bottom: 1px solid var(--shade); }
.spine { width: 15px; display: flex; flex-direction: column; padding: 0 1px; align-items: center; }
.spine h2 { flex: 1; width: 13px; background: var(--navy); color: #fff; writing-mode: vertical-rl; transform: rotate(180deg); padding-top: 3px; line-height: 13px; }
.tbody { flex: 1; min-width: 0; border-bottom: 2px solid #fff; }
.logbox { display: flex; height: 225px; border-top: 1px solid var(--shade); border-left: 1px solid var(--shade); }
.logscroll { flex: 1; overflow: hidden; background: #fff; }
.log th { height: 17px; padding-left: 5px; }
.log th:first-child { width: 159px; }
.log td { height: 20px; padding: 0 4px; border: solid #c6c3c6; border-width: 0 0 1px 0; white-space: nowrap; overflow: hidden; }
.log td:first-child { border-right-width: 1px; }
.log tbody tr:nth-child(odd) { background: #efebef; }
.log tbody tr.sel { background: var(--navy); color: #fff; }
.log td svg { display: inline-block; width: 14px; height: 14px; vertical-align: -3px; margin: 0 4px 0 -1px; }
.log tbody::before { content: ""; display: table-row; height: 1px; }
.scrollbar { width: 16px; display: flex; flex-direction: column; background: repeating-conic-gradient(#fff 0 25%, var(--face) 0 50%) 0 0 / 2px 2px; }
.scrollbar button, .scrollbar i { height: 16px; background: var(--face); border: 1px solid; border-color: #fff #424142 #424142 #fff; box-shadow: inset -1px -1px var(--shade); }
.scrollbar i { height: 31px; }
.scrollbar .dn { margin-top: auto; }
.scrollbar svg { width: 7px; height: 5px; }
.termtabs { padding-left: 3px; }
.termtabs .tab { padding: 0 9px; }
.tab sub { color: #f00; font: italic 700 9px/10px var(--ui); align-self: flex-end; margin: 0 0 0 2px; }

.statusbar { height: 25px; display: flex; align-items: center; padding-top: 3px; border-top: 1px solid #fff; border-bottom: 1px solid #fff; }
.statusbar span { height: 18px; line-height: 18px; padding-left: 4px; border-left: 1px solid var(--shade); box-shadow: inset 1px 0 #fff; }
.statusbar .help { flex: 1; border: 0; box-shadow: none; padding-left: 2px; }
.s-profile { width: 110px; }
.s-date { width: 100px; }
.s-o { width: 72px; }
.s-h, .s-l, .s-c { width: 70px; }
.s-v { width: 67px; }
.s-net { width: 121px; display: flex; align-items: center; gap: 3px; }
.s-net svg { width: 24px; height: 14px; }

.taskbar { height: 43px; display: flex; align-items: center; padding: 1px 3px 0 2px; }
.start { width: 52px; height: 38px; font-weight: 700; gap: 1px; border: 1px solid; border-color: #fff #424142 #424142 #fff; box-shadow: inset -1px -1px var(--shade); }
.start svg { width: 16px; height: 18px; }
.tsep { width: 3px; height: 34px; margin: 0 7px; border: 1px solid; border-color: #fff var(--shade) var(--shade) #fff; }
.apps { display: flex; flex: 1; gap: 2px; }
.app { width: 48px; height: 38px; border: 1px solid transparent; }
.app svg { width: 32px; height: 32px; }
.app.on { background: #fff; border-color: #424142 #fff #fff #424142; }
.app.raised { border-color: #fff #424142 #424142 #fff; box-shadow: inset -1px -1px var(--shade); }
.lang { padding-right: 4px; border-right: 1px solid var(--shade); height: 22px; line-height: 18px; }
.tray { display: flex; align-items: center; margin-left: 4px; gap: 7px; height: 38px; padding: 0 0 0 5px; border: 1px solid; border-color: var(--shade) #fff #fff var(--shade); }
.tray svg { width: 18px; height: 18px; }
.tray .chev { width: 8px; height: 12px; margin-right: 1px; }
.tray time { width: 60px; text-align: center; line-height: 16px; }
```
FILE: chart.js
```js
// Plot geometry: the first bar is centred at x = 0, bars are 32px apart.
const STEP = 32, HALF = 12, TOP = 97;
// [high, body top, body bottom, low, filled]
const bars = [
  [500,524,538,605,1],[522,538,633,643,1],[607,633,637,684,1],[589,637,681,685,1],[593,598,682,700,0],
  [479,571,600,605,0],[566,570,599,613,1],[589,597,664,695,1],[586,623,664,685,0],[624,624,649,677,1],
  [555,569,649,665,0],[562,569,585,612,1],[523,526,585,612,0],[497,501,526,574,0],[437,461,501,546,0],
  [415,454,486,494,1],[477,488,498,520,1],[482,498,504,564,1],[430,446,504,530,0],[391,395,447,464,0],
  [336,387,399,408,0],[346,387,395,403,1],[310,318,394,448,0],[309,317,436,436,1],[367,385,434,470,0],
  [378,385,431,431,1],[402,422,425,436,0],[386,399,424,436,0],[395,400,400,433,0],[371,397,413,423,1],
  [361,370,410,410,0],[336,350,368,384,0],[326,350,367,367,1],[357,366,367,373,0],[354,359,366,382,0],
  [354,359,379,379,1],[285,285,379,384,0],[280,285,297,311,1],[127,223,295,298,0],[151,220,257,289,1],
  [244,256,257,291,0],[235,257,271,277,1],[228,271,304,307,1],[225,237,303,310,0],[223,235,237,275,1],
  [184,185,238,259,0],[182,185,197,202,1]
];
// [bar index, y]
const yellow = [[16,396],[17,384],[18,374],[19,362],[20,334],[21,324],[22,310],[23,279],[24,282],[25,275],[26,274],[27,275],
  [27,564],[26,577],[25,582],[24,596],[23,615],[22,633],[21,650],[20,688],[19,701]];
const blue = [[23,317],[24,320],[25,313],[26,312],[25,544],[24,558],[23,577]];

const dash = list => list.map(([i, y]) => `M${i * STEP - 3} ${y - TOP + .5}h7`).join('');
let s = '<g shape-rendering="crispEdges" stroke-width="1">';
s += '<path d="M0 100.5H4000" stroke="#708090"/>';
bars.forEach(([h, t, b, l, fill], i) => {
  const x = i * STEP;
  s += `<path d="M${x + .5} ${h - TOP}V${l - TOP + 1}" stroke="#0f0"/>`;
  s += `<path d="M${x - HALF + .5} ${t - TOP + .5}h24v${b - t}h-24z" stroke="#0f0" fill="${fill ? '#fff' : '#000'}"/>`;
});
s += `<path d="${dash(yellow)}" stroke="#ff0"/><path d="${dash(blue)}" stroke="#6495ed"/>`;
s += '<path d="M702 211.5 833 293.500" stroke="red" stroke-dasharray="3 3" fill="none"/>';
s += '<path d="M716.5 0V440M716.5 445V2000M0 442.500H714M719 442.500H4000" stroke="#fff"/></g>';
s += '<path d="m701 207 4 4.500-4 4.500v-2h-2v-5h2z" fill="red" stroke="#fff"/>';
s += '<path d="m837 289-5 5 5 5z" fill="#ee82ee" stroke="#fff"/>';
s += '<path d="M1338 0h12l-6 6zM0 614v6h6z" fill="#708090"/>';
s += '<text transform="translate(837 559) rotate(-90)" fill="#dda0dd" font-family="Liberation Sans, sans-serif" font-size="13">3. MA</text>';
document.getElementById('plot').innerHTML = s;

const tags = [[1.66845,100],[1.66785,133],[1.66720,168],[1.66655,204],[1.66595,237],[1.66530,271],[1.66470,304],[1.66405,339],
  [1.66340,374],[1.66280,407],[1.66215,442],[1.66155,475],[1.66090,510],[1.66025,545],[1.65965,578],[1.65900,613],[1.65840,646],[1.65775,681],[1.65715,714]];
let p = '';
tags.forEach(([v, y]) => {
  p += `<rect y="${y - 96}" width="3" height="1"/><text x="5" y="${y - 92}">${v.toFixed(5)}</text>`;
});
[[1.66667, 197], [1.66036, 539]].forEach(([v, y]) => {
  p += `<rect x="2" y="${y - 102}" width="39" height="12"/><text x="5" y="${y - 92}" fill="#000">${v.toFixed(5)}</text>`;
});
document.getElementById('prices').innerHTML = p;

let t = '';
for (let i = 0; i < 24; i++) {
  const m = 18 * 60 + i * 30, hh = String(Math.floor(m / 60) % 24).padStart(2, '0'), mm = String(m % 60).padStart(2, '0');
  const label = i === 0 ? '30 Mar 2017' : `${m < 1440 ? 30 : 31} Mar ${hh}:${mm}`;
  t += `<rect x="${1 + i * 64}" width="1" height="3"/>`;
  if (i !== 11) t += `<text x="${i * 64 - 1}" y="12">${label}</text>`;
}
t += '<rect x="678" y="3" width="79" height="12"/><text x="680" y="12" fill="#000">2017.03.30 23:30</text>';
document.getElementById('times').innerHTML = t;
```
